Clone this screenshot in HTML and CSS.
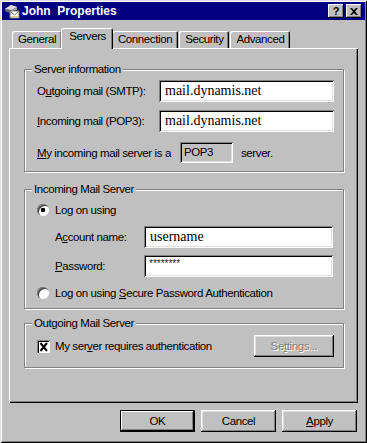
FILE: index.html
```html
<!DOCTYPE html>
<html lang="en">
<head>
  <meta charset="UTF-8">
  <title>John Properties</title>
  <link rel="stylesheet" href="styles.css">
</head>
<body>
  <div class="window">
    <!-- 标题栏 -->
    <div class="titlebar">
      <svg class="app-icon" width="16" height="16" viewBox="0 0 16 16">
        <path d="M1 6 L7 2 L13 4 L13 7 L7 10 L1 8 Z" fill="#9a9a9a"/>
        <path d="M1 6 L7 2 L13 4 L7 7 Z" fill="#dcdcdc"/>
        <path d="M1 6 L7 7 L7 10 L1 8 Z" fill="#6a6a6a"/>
        <rect x="6" y="8" width="9" height="7" fill="#fff" stroke="#707070" stroke-width="1"/>
        <path d="M6.5 8.5 L10.5 12 L14.5 8.5" fill="none" stroke="#808080"/>
        <rect x="7" y="13" width="7" height="1" fill="#e8d080"/>
      </svg>
      <span class="title">John&nbsp; Properties</span>
      <span class="tb-btns">
        <span class="tb-btn help">?</span>
        <span class="tb-btn">
          <svg width="8" height="7" viewBox="0 0 8 7"><path d="M0 0h2l2 2 2-2h2L5 3.5 8 7H6L4 5 2 7H0l3-3.5z" fill="#000"/></svg>
        </span>
      </span>
    </div>

    <!-- 选项卡 -->
    <div class="tabs">
      <div class="tab">General</div>
      <div class="tab active">Servers</div>
      <div class="tab">Connection</div>
      <div class="tab">Security</div>
      <div class="tab">Advanced</div>
    </div>

    <div class="panel">
      <fieldset class="group g-info">
        <legend>Server information</legend>
        <div class="row first">
          <span class="lbl">O<u>u</u>tgoing mail (SMTP):</span>
          <span class="field serif">mail.dynamis.net</span>
        </div>
        <div class="row">
          <span class="lbl"><u>I</u>ncoming mail (POP3):</span>
          <span class="field serif">mail.dynamis.net</span>
        </div>
        <div class="row kind">
          <span class="lbl"><u>M</u>y incoming mail server is a</span>
          <span class="readonly">POP3</span>
          <span class="after">server.</span>
        </div>
      </fieldset>

      <fieldset class="group g-in">
        <legend>Incoming Mail Server</legend>
        <div class="opt first">
          <span class="radio on"></span>
          <span>Lo<u>g</u> on using</span>
        </div>
        <div class="row sub">
          <span class="lbl">A<u>c</u>count name:</span>
          <span class="field serif">username</span>
        </div>
        <div class="row sub pw">
          <span class="lbl"><u>P</u>assword:</span>
          <span class="field stars">********</span>
        </div>
        <div class="opt">
          <span class="radio"></span>
          <span>Log on using <u>S</u>ecure Password Authentication</span>
        </div>
      </fieldset>

      <fieldset class="group g-out">
        <legend>Outgoing Mail Server</legend>
        <div class="row first">
          <svg class="check" width="13" height="13" viewBox="0 0 13 13">
            <rect x="0" y="0" width="13" height="13" fill="#fff"/>
            <path d="M0 0h13v1H1v12H0z" fill="#808080"/>
            <path d="M1 1h11v1H2v11H1z" fill="#000"/>
            <path d="M3.5 3 L10 11 M10 3 L3.5 11" stroke="#000" stroke-width="2"/>
          </svg>
          <span class="chk-text">My ser<u>v</u>er requires authentication</span>
          <span class="btn disabled">Se<u>t</u>tings...</span>
        </div>
      </fieldset>
    </div>

    <!-- 底部按钮 -->
    <div class="buttons">
      <span class="btn default">OK</span>
      <span class="btn">Cancel</span>
      <span class="btn"><u>A</u>pply</span>
    </div>
  </div>
</body>
</html>
```

FILE: styles.css
```css
/* 清除默认样式 */
*{
  margin: 0;
  padding: 0;
  box-sizing: border-box;
}
body{
  background-color: #c0c0c0;
  font-family: "Liberation Sans", Arial, sans-serif;
  font-size: 11.5px;
  letter-spacing: -0.4px;
  color: #000;
}
/* 窗口外框 */
.window{
  width: 367px;
  height: 443px;
  padding: 2px;
  background-color: #c0c0c0;
  box-shadow: inset 1px 1px #dfdfdf, inset -1px -1px #000,
              inset 2px 2px #fff, inset -2px -2px #808080;
  display: flex;
  flex-direction: column;
}
/* 标题栏 */
.titlebar{
  height: 18px;
  background-color: #000080;
  color: #fff;
  display: flex;
  align-items: center;
  padding: 0 3px 0 2px;
}
.app-icon{
  margin-right: 2px;
}
.title{
  font-weight: bold;
  font-size: 12px;
  letter-spacing: 0;
}
.tb-btns{
  margin-left: auto;
  display: flex;
  gap: 2px;
}
.tb-btn{
  width: 16px;
  height: 14px;
  background-color: #c0c0c0;
  box-shadow: inset -1px -1px #000, inset 1px 1px #fff, inset -2px -2px #808080;
  display: flex;
  align-items: center;
  justify-content: center;
  color: #000;
}
.help{
  font-weight: bold;
  font-size: 11px;
}
/* 选项卡 */
.tabs{
  display: flex;
  align-items: flex-end;
  height: 20px;
  margin-top: 8px;
  padding-left: 10px;
}
.tab{
  height: 17px;
  line-height: 17px;
  padding: 0 6px;
  margin-right: 1px;
  border-radius: 2px 2px 0 0;
  box-shadow: inset 1px 1px #fff, inset -1px 0 #000, inset -2px 0 #808080;
}
.tab.active{
  position: relative;
  z-index: 1;
  height: 21px;
  line-height: 16px;
  margin: 0 -1px -1px -2px;
  padding: 0 7px 0 8px;
  background-color: #c0c0c0;
}
/* 选项卡内容 */
.panel{
  width: 349px;
  height: 355px;
  margin-left: 7px;
  padding: 14px 14px 0 15px;
  box-shadow: inset 1px 1px #fff, inset -1px -1px #000, inset -2px -2px #808080;
}
/* 分组框 */
.group{
  border: 1px solid #808080;
  box-shadow: inset 1px 1px #fff, 1px 1px #fff;
  padding: 0 9px 8px 12px;
  min-inline-size: 0;
}
.group legend{
  margin-left: -5px;
  padding: 0 2px;
  line-height: 14px;
  background-color: #c0c0c0;
}
.g-in{
  margin-top: 10px;
  padding-bottom: 7px;
}
.g-out{
  margin-top: 7px;
  padding-bottom: 10px;
}
.row{
  display: flex;
  align-items: center;
  margin-top: 8px;
}
.row.first{
  margin-top: 4px;
}
.g-out .row.first{
  margin-top: 5px;
}
.lbl{
  white-space: nowrap;
}
.g-info .lbl{
  width: 122px;
}
.field{
  width: 175px;
  height: 22px;
  padding: 0 6px;
  background-color: #fff;
  box-shadow: inset 1px 1px #808080, inset -1px -1px #fff,
              inset 2px 2px #000, inset -2px -2px #dfdfdf;
  line-height: 22px;
  white-space: nowrap;
}
.serif{
  font-family: "Liberation Serif", "Times New Roman", serif;
  font-size: 14px;
  letter-spacing: 0;
}
.row.kind{
  margin-top: 10px;
}
.kind .lbl{
  width: 143px;
}
.readonly{
  width: 53px;
  height: 21px;
  line-height: 21px;
  padding: 0 4px;
  box-shadow: inset 1px 1px #808080, inset -1px -1px #fff,
              inset 2px 2px #000, inset -2px -2px #dfdfdf;
}
.after{
  margin-left: 8px;
}
/* 单选按钮 */
.opt{
  display: flex;
  align-items: center;
  gap: 6px;
  height: 16px;
  margin-top: 8px;
  white-space: nowrap;
}
.opt.first{
  margin-top: 6px;
}
.radio{
  width: 12px;
  height: 12px;
  border-radius: 50%;
  background-color: #fff;
  box-shadow: inset 1px 1px #808080, inset 2px 2px #404040;
}
.radio.on{
  background: radial-gradient(circle, #000 2px, #fff 2.6px);
}
.sub{
  padding-left: 18px;
}
.sub .lbl{
  width: 89px;
}
.sub .field{
  width: 189px;
}
.sub.pw{
  margin-top: 7px;
}
.stars{
  font-size: 10px;
  letter-spacing: 0;
  color: #202020;
  line-height: 18px;
  padding-left: 5px;
}
/* 复选框 */
.check{
  margin: 0 5px 0 0;
}
.chk-text{
  flex: 1;
  white-space: nowrap;
}
/* 按钮 */
.btn{
  width: 75px;
  height: 22px;
  display: flex;
  align-items: center;
  justify-content: center;
  box-shadow: inset -1px -1px #000, inset 1px 1px #fff,
              inset -2px -2px #808080, inset 2px 2px #dfdfdf;
}
.btn.default{
  box-shadow: inset 0 0 0 1px #000, inset -2px -2px #000, inset 2px 2px #fff,
              inset -3px -3px #808080;
}
.btn.disabled{
  width: 80px;
  color: #808080;
  text-shadow: 1px 1px #fff;
}
.buttons{
  display: flex;
  justify-content: flex-end;
  gap: 6px;
  margin-top: 7px;
  padding-right: 8px;
}
```
